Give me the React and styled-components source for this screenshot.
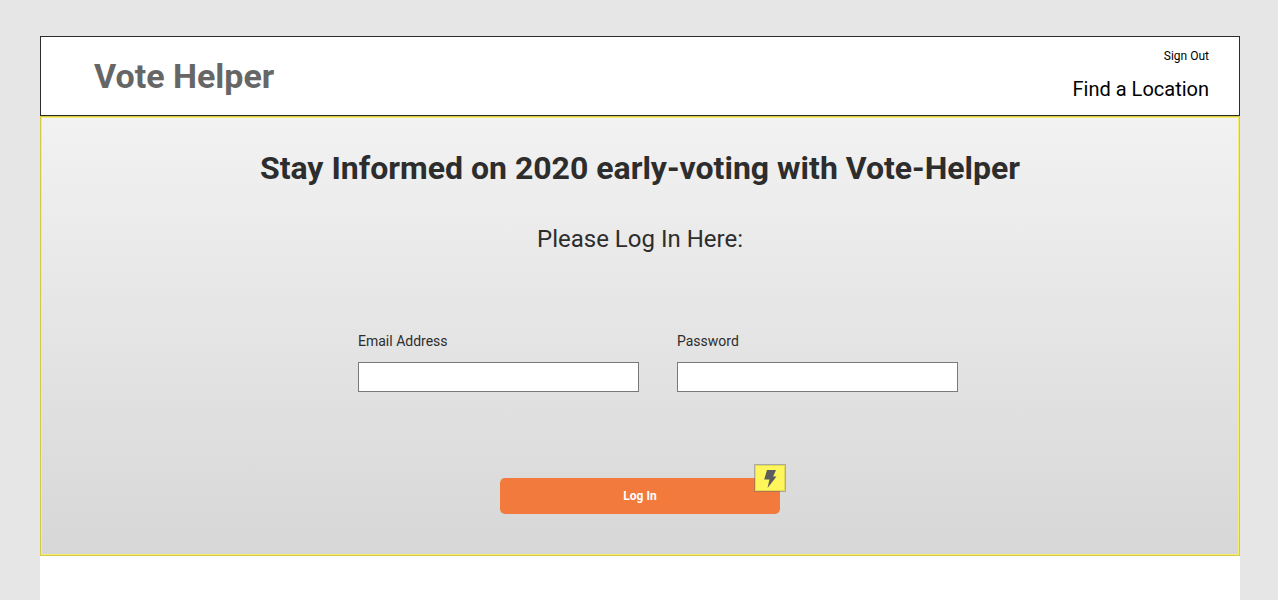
import React from "react";
import styled, { createGlobalStyle } from "styled-components";

const GlobalStyle = createGlobalStyle`
  * { box-sizing: border-box; }
  body {
    margin: 0;
    background: #e6e6e6;
    font-family: Roboto, "Liberation Sans", sans-serif;
    color: #2d2d2d;
  }
`;

const Page = styled.div`
  min-height: 100vh;
  padding: 36px 38px 0 40px;
  display: flex;
  flex-direction: column;
`;

const Sheet = styled.main`
  flex: 1;
  background: #fff;
`;

const Header = styled.header`
  display: flex;
  justify-content: space-between;
  height: 80px;
  padding: 0 30px 0 53px;
  border: 1px solid #2b2b2d;
`;

const Brand = styled.h1`
  margin: 0;
  font-size: 34px;
  line-height: 78px;
  font-weight: 700;
  color: #666;
`;

const Nav = styled.nav`
  display: flex;
  flex-direction: column;
  align-items: flex-end;
  gap: 12px;
  padding-top: 12px;
`;

const NavLink = styled.a`
  color: #000;
  text-decoration: none;
  font-size: ${(p) => (p.$large ? 20 : 12)}px;
  line-height: ${(p) => (p.$large ? 28 : 14)}px;
`;

const Panel = styled.section`
  border: 1px solid #d3cb46;
  box-shadow: inset 0 0 0 1px #f5ef6c;
  background: linear-gradient(#f2f2f2, #d7d7d7);
  display: flex;
  flex-direction: column;
  align-items: center;
  padding: 31px 0 41px;
`;

const Title = styled.h2`
  margin: 0;
  font-size: 32px;
  line-height: 40px;
  font-weight: 700;
`;

const Subtitle = styled.p`
  margin: 36px 0 0;
  font-size: 24px;
  line-height: 30px;
`;

const LoginForm = styled.form`
  display: flex;
  flex-direction: column;
  align-items: center;
  width: 100%;
  padding-top: 78px;
`;

const Fields = styled.div`
  display: flex;
  gap: 38px;
  padding-left: 36px;
`;

const Field = styled.label`
  display: flex;
  flex-direction: column;
  gap: 12px;
  font-size: 14px;
  line-height: 18px;
`;

const TextInput = styled.input`
  width: 281px;
  height: 30px;
  padding: 0 8px;
  border: 1px solid #797979;
  border-radius: 0;
  background: #fff;
  font: inherit;
`;

const Action = styled.div`
  position: relative;
  margin-top: 86px;
`;

const SubmitButton = styled.button`
  display: block;
  width: 280px;
  height: 36px;
  border: 0;
  border-radius: 5px;
  background: #f17a3c;
  color: #fff;
  font: 700 12px Roboto, "Liberation Sans", sans-serif;
`;

const Badge = styled.span`
  position: absolute;
  top: -14px;
  right: -6px;
  width: 32px;
  height: 28px;
  display: flex;
  align-items: center;
  justify-content: center;
  background: #fff65c;
  background-clip: padding-box;
  border: 1px solid rgba(110, 110, 90, 0.45);
  box-shadow: inset 0 0 0 1px #e3da55;
`;

export default function App() {
  return (
    <>
      <GlobalStyle />
      <Page>
        <Sheet>
          <Header>
            <Brand>Vote Helper</Brand>
            <Nav>
              <NavLink href="#sign-out">Sign Out</NavLink>
              <NavLink href="#locations" $large>Find a Location</NavLink>
            </Nav>
          </Header>
          <Panel>
            <Title>Stay Informed on 2020 early-voting with Vote-Helper</Title>
            <Subtitle>Please Log In Here:</Subtitle>
            <LoginForm onSubmit={(e) => e.preventDefault()}>
              <Fields>
                <Field>
                  Email Address
                  <TextInput type="email" name="email" />
                </Field>
                <Field>
                  Password
                  <TextInput type="password" name="password" />
                </Field>
              </Fields>
              <Action>
                <SubmitButton type="submit">Log In</SubmitButton>
                <Badge aria-hidden="true">
                  <svg width="14" height="20" viewBox="0 0 14 20">
                    <path d="M4 2H13L10.2 8.4H13.5L4.6 20L6.4 11.4H1.2Z" fill="#5c5c60" />
                  </svg>
                </Badge>
              </Action>
            </LoginForm>
          </Panel>
        </Sheet>
      </Page>
    </>
  );
}
